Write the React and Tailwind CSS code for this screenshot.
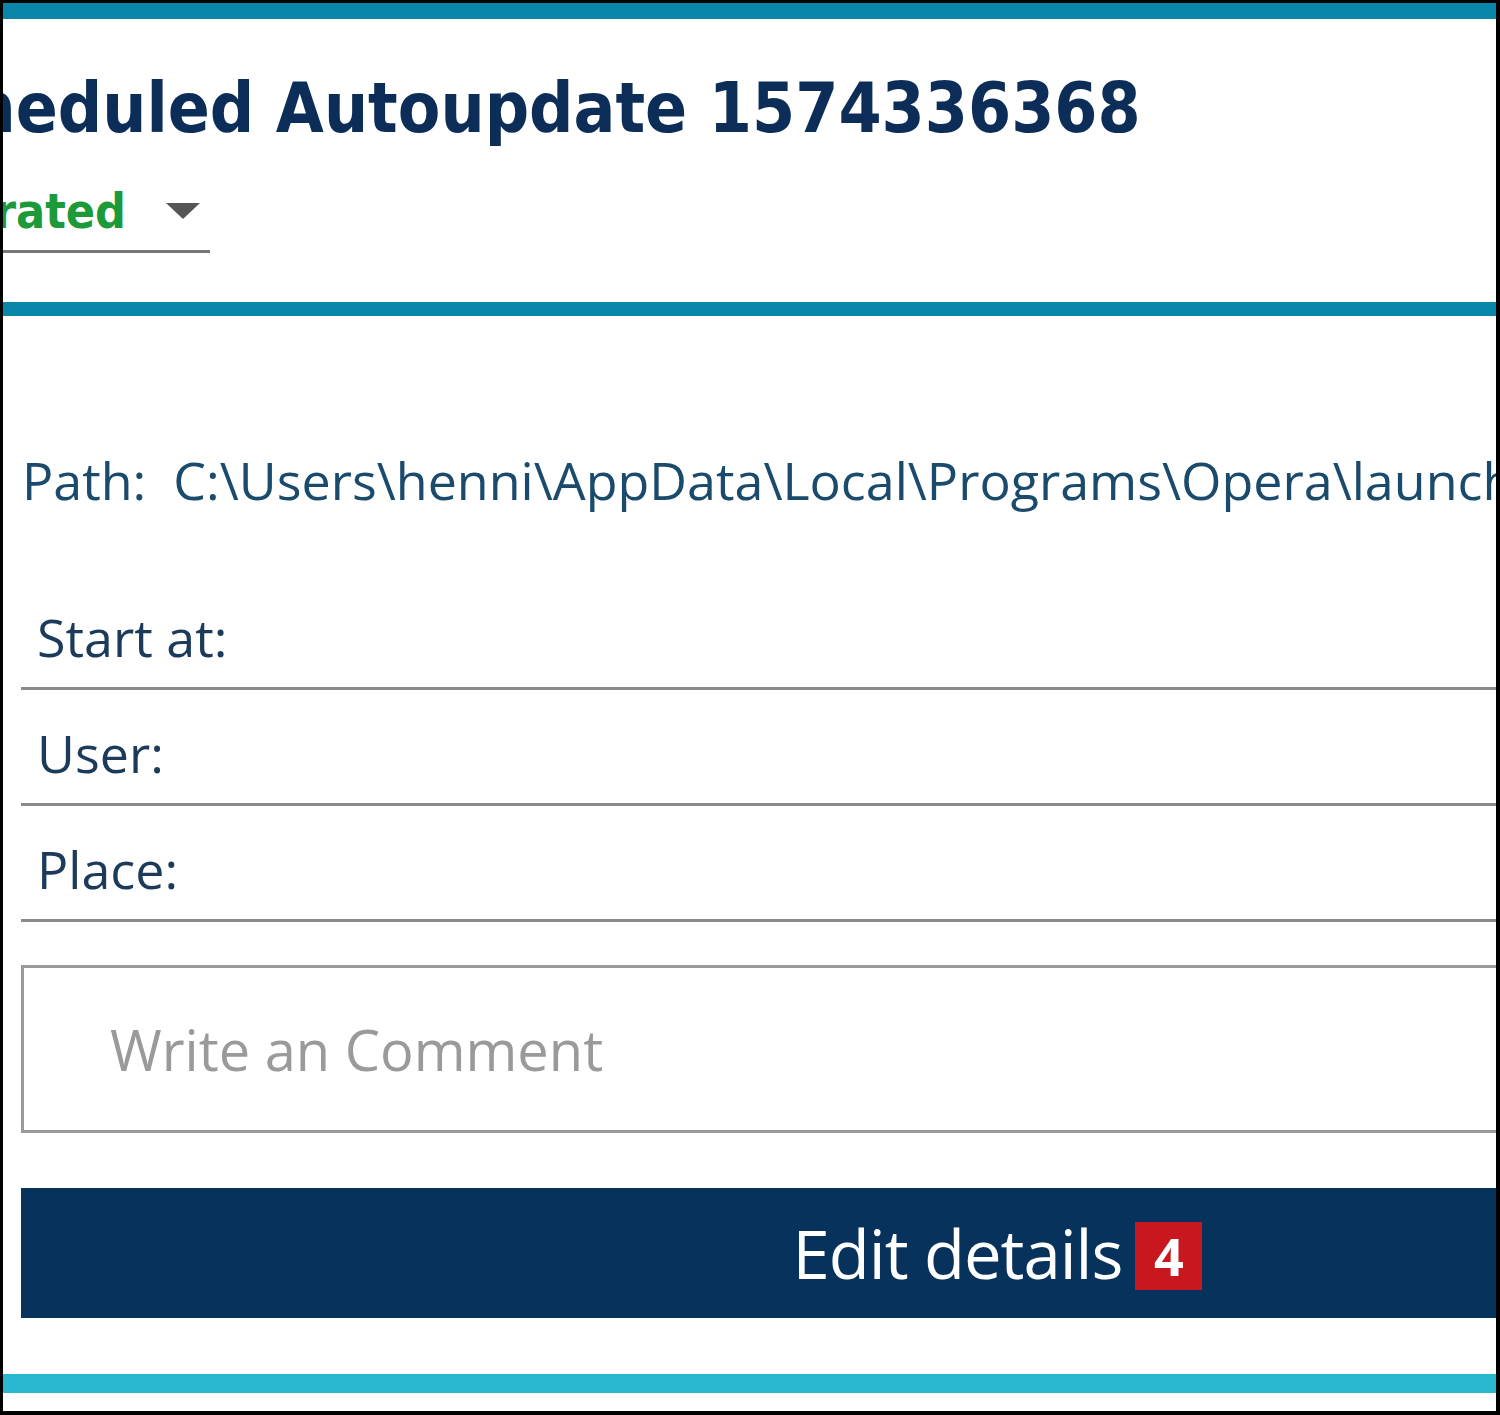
const rows = ['Start at:', 'User:', 'Place:'];

export default function App() {
  return (
    <div className="w-[1500px] h-[1415px] bg-black pl-[3px] pr-[4px] pt-[3px] pb-[4px]">
      <div className="h-full bg-white flex flex-col overflow-hidden font-['Open_Sans',sans-serif]">
        <div className="h-[16px] bg-[#0a87a8] shrink-0" />

        {/* header */}
        <div className="h-[283px] shrink-0 overflow-hidden">
          <h1 className="mt-[49px] ml-[-113px] whitespace-nowrap text-[69px] leading-[80px] font-bold text-[#0b2d57] font-['DejaVu_Sans_Condensed','DejaVu_Sans',sans-serif]">
            Scheduled Autoupdate 1574336368
          </h1>
          <div className="w-[207px] border-b-[3px] border-[#777] flex items-center h-[72px] pb-[10px] mt-[33px] overflow-hidden">
            <div className="w-[123px] shrink-0 flex justify-end overflow-hidden">
              <span className="whitespace-nowrap text-[48px] font-bold text-[#1c9a3a] font-['DejaVu_Sans_Condensed','DejaVu_Sans',sans-serif]">
                Generated
              </span>
            </div>
            <span className="ml-[40px] w-0 h-0 border-l-[17px] border-r-[17px] border-t-[16px] border-l-transparent border-r-transparent border-t-[#555]" />
          </div>
        </div>

        <div className="h-[14px] bg-[#0a87a8] shrink-0" />

        {/* details */}
        <div className="pl-[18px] pt-[134px] flex flex-col">
          <div className="whitespace-nowrap text-[52px] leading-[60px] text-[#1a4a6c] pl-[1px]">
            Path:&nbsp; C:\Users\henni\AppData\Local\Programs\Opera\launcher.exe
          </div>

          <div className="mt-[64px] flex flex-col">
            {rows.map((label) => (
              <div key={label} className="h-[116px] border-b-[3px] border-[#8a8a8a] flex items-end pb-[20px] pl-[16px]">
                <span className="text-[52px] leading-[60px] text-[#1c3a5a]">{label}</span>
              </div>
            ))}
          </div>

          <div className="mt-[43px] h-[168px] border-[3px] border-r-0 border-[#9a9a9a] flex items-center pl-[86px]">
            <span className="text-[56px] text-[#9a9a9a]">Write an Comment</span>
          </div>

          <button className="mt-[55px] h-[130px] bg-[#06325c] flex items-center justify-center pl-[478px] gap-[13px]">
            <span className="text-[67px] leading-[80px] tracking-[-1px] text-white">Edit details</span>
            <span className="mt-[6px] bg-[#c8171e] text-white font-bold text-[52px] leading-[68px] w-[67px] text-center">4</span>
          </button>
        </div>

        <div className="mt-auto mb-[18px] h-[19px] bg-[#29b8cf] shrink-0" />
      </div>
    </div>
  );
}
